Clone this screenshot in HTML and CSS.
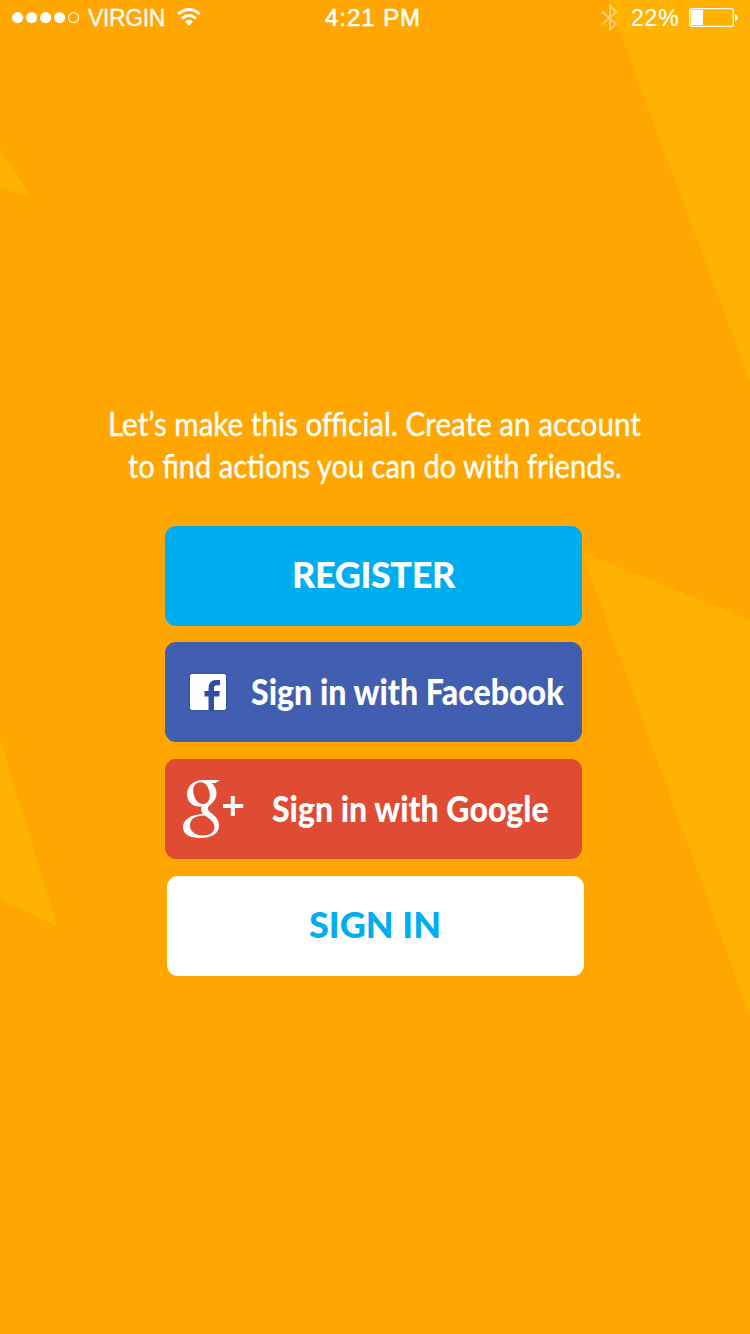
FILE: index.html
```html
<!DOCTYPE html>
<html lang="en">
<head>
<meta charset="utf-8">
<title>Create an account</title>
<link rel="stylesheet" href="styles.css">
</head>
<body>
<div class="screen">
  <svg class="backdrop" viewBox="0 0 750 1334" aria-hidden="true">
    <path d="M608 0H750V382ZM0 148L31 197L0 187ZM582 552L750 620V1016ZM0 738L57 926L0 899Z"/>
  </svg>
  <header class="status">
    <div class="status-left">
      <svg class="signal" width="68" height="12" viewBox="0 0 68 12">
        <g fill="#fff"><circle cx="5.6" cy="5.6" r="5.6"/><circle cx="19.6" cy="5.6" r="5.6"/><circle cx="33.6" cy="5.6" r="5.6"/><circle cx="47.6" cy="5.6" r="5.6"/></g>
        <circle cx="61.6" cy="5.6" r="5" fill="none" stroke="#fff" stroke-width="1.1"/>
      </svg>
      <span class="carrier">VIRGIN</span>
      <svg class="wifi" width="24" height="18" viewBox="0 0 24 18">
        <g fill="none" stroke="#fff" stroke-width="2.7"><path d="M1.2 6.1Q12 -3.1 22.8 6.1"/><path d="M5 10.4Q12 4.2 19 10.4"/></g>
        <path d="M8 13.4Q12 10.2 16 13.4L12 17.7Z" fill="#fff"/>
      </svg>
    </div>
    <span class="time">4:21 PM</span>
    <div class="status-right">
      <svg class="bluetooth" width="18" height="28" viewBox="0 0 18 28"><path d="M2 7.500L16 20L10 25.500V1.500L16 8L2 20.500" fill="none" stroke="#fff" stroke-opacity=".45" stroke-width="2"/></svg>
      <span class="percent">22%</span>
      <svg class="battery" width="49" height="19" viewBox="0 0 49 19">
        <rect x=".7" y=".7" width="43.6" height="17.6" rx="2" fill="none" stroke="#fff" stroke-width="1.3"/>
        <rect x="2" y="2" width="12" height="15" fill="#fff"/>
        <path d="M46 6Q48.7 6.5 48.7 9.5T46 13Z" fill="#fff"/>
      </svg>
    </div>
  </header>
  <main class="content">
    <p class="intro"><span class="line line-one">Let’s make this official. Create an account</span><span class="line line-two">to find actions you can do with friends.</span></p>
    <div class="actions">
      <button class="button register"><span class="label">REGISTER</span></button>
      <button class="button facebook">
        <svg class="facebook-icon" width="40" height="40" viewBox="0 0 40 40">
          <rect x=".7" y=".7" width="38.600" height="38.600" rx="3" fill="#2e4ba3" opacity=".55"/>
          <rect x="2" y="2" width="36" height="36" rx="2" fill="#fff"/>
          <path d="M20.500 38V24.500H16.500V19H20.500V16.500Q20.500 8 28 8H32V13.200H29Q26 13.200 26 16V19H31.800L31.300 24.500H26V38Z" fill="#304ea5"/>
        </svg>
        <span class="label">Sign in with Facebook</span>
      </button>
      <button class="button google">
        <svg class="google-icon" width="62" height="62" viewBox="0 0 62 62">
          <g fill="#fff">
            <path fill-rule="evenodd" d="M37 2L32.500 5H28.500C32 8 33.500 11 33.500 15.500C33.500 21 30 24.500 26.500 27.500C24 30 24.500 32 27.500 34.500C32 38 36 41.500 36 47.500C36 56 28 60 17 60C7 60 0 56.500 0 49C0 41.500 8 36.500 20 36C18.300 33.500 17.500 31.500 18.500 28.500C10 29.500 4 23.500 4 16.500C4 7.500 11 2 20.500 2ZM17.500 4.200C12.500 4.600 10 8.200 10.200 13C10.500 20 15 26.500 20.500 26C25 25.500 27 22 26.800 17C26.500 10 23 4 17.500 4.200ZM22 37.600C12.500 37.300 7 41 7 47.500C7 53.500 12.500 57.500 20 57.500C27 57.500 31.500 54 31.500 49C31.500 44.500 27.500 41.500 22 37.600Z"/>
            <path d="M47.800 18h4v8h8.400v4h-8.400v8h-4v-8h-7.800v-4h7.800z"/>
          </g>
        </svg>
        <span class="label">Sign in with Google</span>
      </button>
      <button class="button sign-in"><span class="label">SIGN IN</span></button>
    </div>
  </main>
</div>
</body>
</html>
```
FILE: styles.css
```css
* { box-sizing: border-box; }
body { margin: 0; background: #ffa600; }
.screen { position: relative; width: 750px; height: 1334px; overflow: hidden; color: #fff; font-family: Lato, sans-serif; }
.backdrop { position: absolute; inset: 0; width: 750px; height: 1334px; fill: #ffb300; }
svg { display: block; flex: none; }
.status { position: relative; height: 40px; padding: 0 12px; display: grid; grid-template-columns: 312px 100px 1fr; font: 23px/36px "Liberation Sans", sans-serif; white-space: nowrap; }
.status-left, .status-right { display: flex; height: 36px; }
.signal { margin-top: 12px; }
.carrier { width: 82px; margin-left: 8px; letter-spacing: -.35px; -webkit-text-stroke: .3px #fff; }
.wifi { margin: 8px 0 0 7px; }
.time { padding-left: 1px; font-size: 24px; letter-spacing: .95px; -webkit-text-stroke: .6px #fff; }
.status-right { padding-left: 176px; }
.bluetooth { margin-top: 4px; }
.percent { width: 58px; padding-left: 13px; letter-spacing: .8px; -webkit-text-stroke: .2px #fff; }
.battery { margin: 8px 0 0 13px; }
.content { position: relative; padding-top: 362px; }
.intro { margin: 0; font-size: 33px; line-height: 42px; font-weight: 400; -webkit-text-stroke: .4px #fff; }
.line { display: block; width: max-content; white-space: nowrap; transform-origin: left center; }
.line-one { margin-left: 108px; transform: scaleX(.897); }
.line-two { margin-left: 128px; transform: scaleX(.88); }
.actions { display: flex; flex-direction: column; padding: 40px 0 0 165px; }
.button { display: flex; align-items: center; width: 417px; height: 100px; padding: 0; margin: 0 0 17px; border: 0; border-radius: 11px; color: #fff; font: 900 36px/44px Lato, sans-serif; white-space: nowrap; }
.label { padding-bottom: 2px; transform-origin: left center; }
.register { margin-bottom: 16px; padding-left: 127px; padding-bottom: 2px; letter-spacing: -.4px; background: #00aeef; }
.facebook { padding-left: 23px; background: #425eb0; }
.facebook .label { margin-left: 23px; transform: scaleX(.892); }
.google { padding-left: 18px; background: #df4b33; }
.google .label { margin-left: 27px; transform: scaleX(.89); }
.sign-in { margin-left: 2px; padding-left: 142px; padding-bottom: 2px; background: #fff; color: #00aeef; }
```
